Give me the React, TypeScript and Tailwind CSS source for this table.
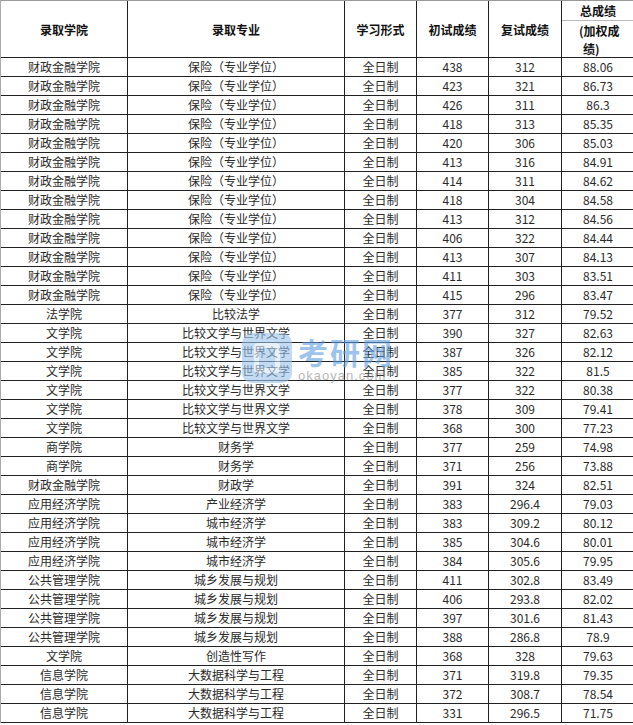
const rows: [string, string, string, string, string][] = [
  ['财政金融学院', '保险（专业学位）', '438', '312', '88.06'],
  ['财政金融学院', '保险（专业学位）', '423', '321', '86.73'],
  ['财政金融学院', '保险（专业学位）', '426', '311', '86.3'],
  ['财政金融学院', '保险（专业学位）', '418', '313', '85.35'],
  ['财政金融学院', '保险（专业学位）', '420', '306', '85.03'],
  ['财政金融学院', '保险（专业学位）', '413', '316', '84.91'],
  ['财政金融学院', '保险（专业学位）', '414', '311', '84.62'],
  ['财政金融学院', '保险（专业学位）', '418', '304', '84.58'],
  ['财政金融学院', '保险（专业学位）', '413', '312', '84.56'],
  ['财政金融学院', '保险（专业学位）', '406', '322', '84.44'],
  ['财政金融学院', '保险（专业学位）', '413', '307', '84.13'],
  ['财政金融学院', '保险（专业学位）', '411', '303', '83.51'],
  ['财政金融学院', '保险（专业学位）', '415', '296', '83.47'],
  ['法学院', '比较法学', '377', '312', '79.52'],
  ['文学院', '比较文学与世界文学', '390', '327', '82.63'],
  ['文学院', '比较文学与世界文学', '387', '326', '82.12'],
  ['文学院', '比较文学与世界文学', '385', '322', '81.5'],
  ['文学院', '比较文学与世界文学', '377', '322', '80.38'],
  ['文学院', '比较文学与世界文学', '378', '309', '79.41'],
  ['文学院', '比较文学与世界文学', '368', '300', '77.23'],
  ['商学院', '财务学', '377', '259', '74.98'],
  ['商学院', '财务学', '371', '256', '73.88'],
  ['财政金融学院', '财政学', '391', '324', '82.51'],
  ['应用经济学院', '产业经济学', '383', '296.4', '79.03'],
  ['应用经济学院', '城市经济学', '383', '309.2', '80.12'],
  ['应用经济学院', '城市经济学', '385', '304.6', '80.01'],
  ['应用经济学院', '城市经济学', '384', '305.6', '79.95'],
  ['公共管理学院', '城乡发展与规划', '411', '302.8', '83.49'],
  ['公共管理学院', '城乡发展与规划', '406', '293.8', '82.02'],
  ['公共管理学院', '城乡发展与规划', '397', '301.6', '81.43'],
  ['公共管理学院', '城乡发展与规划', '388', '286.8', '78.9'],
  ['文学院', '创造性写作', '368', '328', '79.63'],
  ['信息学院', '大数据科学与工程', '371', '319.8', '79.35'],
  ['信息学院', '大数据科学与工程', '372', '308.7', '78.54'],
  ['信息学院', '大数据科学与工程', '331', '296.5', '71.75'],
]

const cols = 'grid grid-cols-[127px_217px_72px_72px_73px_72px]'
const cell = 'flex items-center justify-center border-r border-[#222] whitespace-nowrap'

function Watermark() {
  return (
    <div className="absolute left-[242px] top-[333px] flex items-start gap-[6px] pointer-events-none opacity-60">
      <div className="w-[50px] h-[50px] rounded-[10px] bg-[#9cc3ec] flex items-center justify-center">
        <div className="w-[26px] h-[30px] rounded-[4px] border-[5px] border-[#d8e8f8]" />
      </div>
      <div className="flex flex-col">
        <span className="text-[30px] leading-[36px] font-bold text-[#5d9de0] tracking-[2px]">考研网</span>
        <span className="text-[13px] leading-[14px] text-[#8a8a8a] tracking-[1px] font-['Liberation_Sans',sans-serif]">okaoyan.com</span>
      </div>
    </div>
  )
}

export default function App() {
  return (
    <div className="relative w-[633px] h-[725px] bg-white overflow-hidden text-[12px] text-[#2a2a2a] font-['Noto_Sans_CJK_SC','Noto_Sans',sans-serif]">
      <div className="border-l border-[#aaa]">
        <div className={`${cols} h-[58px] border-t border-[#999] border-b border-b-[#222] font-bold text-[#111]`}>
          <div className={cell}>录取学院</div>
          <div className={cell}>录取专业</div>
          <div className={cell}>学习形式</div>
          <div className={cell}>初试成绩</div>
          <div className={cell}>复试成绩</div>
          <div className="flex flex-col">
            <div className="h-[20px] flex items-center justify-center border-b border-[#bbb]">总成绩</div>
            <div className="pl-[17px] pt-[1px] leading-[18px]">
              <div>(加权成</div>
              <div className="pl-[4px]">绩)</div>
            </div>
          </div>
        </div>
        {rows.map((r, i) => (
          <div key={i} className={`${cols} h-[19px] border-b border-[#222] leading-[18px]`}>
            <div className={cell}>{r[0]}</div>
            <div className={cell}>{r[1]}</div>
            <div className={cell}>全日制</div>
            <div className={cell}>{r[2]}</div>
            <div className={cell}>{r[3]}</div>
            <div className="flex items-center justify-center">{r[4]}</div>
          </div>
        ))}
      </div>
      <Watermark />
    </div>
  )
}
